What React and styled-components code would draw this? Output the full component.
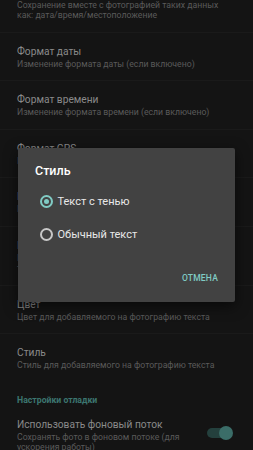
import styled, { createGlobalStyle } from "styled-components";

const GlobalStyle = createGlobalStyle`
  html, body {
    margin: 0;
    padding: 0;
    background: #141414;
    overflow: hidden;
  }
  body {
    font-family: Roboto, "Noto Sans", sans-serif;
  }
`;

const Screen = styled.div`
  width: 253px;
  height: 450px;
  overflow: hidden;
  position: relative;
  background: #141414;
`;

// list is scrolled: top of the first item is above the screen
const List = styled.div`
  display: flex;
  flex-direction: column;
  margin-top: -26.5px;
`;

const Item = styled.div`
  display: flex;
  align-items: center;
  padding: 11px 17px;
  border-bottom: 1px solid ${(p) => (p.$last ? "transparent" : "#1a1a1a")};
`;

const ItemText = styled.div`
  flex: 1;
  display: flex;
  flex-direction: column;
`;

const Title = styled.div`
  font-size: 10.2px;
  line-height: 15px;
  color: #8a8a8a;
  white-space: nowrap;
`;

const Summary = styled.div`
  font-size: 8.7px;
  line-height: 10.5px;
  color: #5a5a5a;
  white-space: nowrap;
`;

const Category = styled.div`
  padding: 12px 17px 0;
  font-size: 8.7px;
  line-height: 11px;
  font-weight: 700;
  color: #3c7670;
`;

const Switch = styled.div`
  position: relative;
  width: 22px;
  height: 10px;
  border-radius: 5px;
  background: #24403d;
  margin: 0 7px 4px 10px;
  &::after {
    content: "";
    position: absolute;
    right: -3.5px;
    top: -2px;
    width: 14px;
    height: 14px;
    border-radius: 50%;
    background: #3b6d68;
  }
`;

const Overlay = styled.div`
  position: absolute;
  inset: 0;
  display: flex;
  align-items: center;
  justify-content: center;
`;

const Dialog = styled.div`
  width: 217px;
  background: #424242;
  border-radius: 2px;
  box-shadow: 0 4px 14px rgba(0, 0, 0, 0.6);
  display: flex;
  flex-direction: column;
  padding: 16px 0 18px;
`;

const DialogTitle = styled.div`
  padding: 0 17px;
  font-size: 12.5px;
  line-height: 14px;
  font-weight: 500;
  color: #ffffff;
  margin-bottom: 6.5px;
`;

const Option = styled.label`
  display: flex;
  align-items: center;
  height: 33px;
  padding: 0 21.5px;
  gap: 5px;
  font-size: 11px;
  color: #e8e8e8;
`;

const Radio = styled.span`
  position: relative;
  box-sizing: border-box;
  width: 13px;
  height: 13px;
  border-radius: 50%;
  border: 2px solid ${(p) => (p.$checked ? "#80cbc4" : "#c8c8c8")};
  &::after {
    content: "";
    display: ${(p) => (p.$checked ? "block" : "none")};
    position: absolute;
    left: 2px;
    top: 2px;
    width: 5px;
    height: 5px;
    border-radius: 50%;
    background: #80cbc4;
  }
`;

const Actions = styled.div`
  display: flex;
  justify-content: flex-end;
  padding: 21.5px 17px 0;
`;

const TextButton = styled.button`
  border: none;
  background: none;
  padding: 0;
  font-family: Roboto, sans-serif;
  font-size: 8.5px;
  font-weight: 500;
  line-height: 12px;
  color: #80cbc4;
  letter-spacing: 0.2px;
`;

const prefs = [
  { title: "Добавлять информацию", summary: ["Сохранение вместе с фотографией таких данных", "как: дата/время/местоположение"] },
  { title: "Формат даты", summary: ["Изменение формата даты (если включено)"] },
  { title: "Формат времени", summary: ["Изменение формата времени (если включено)"] },
  { title: "Формат GPS", summary: ["Изменение формата координат (если включено)"] },
  { title: "Размер шрифта", summary: ["Размер добавляемого на фотографию текста"] },
  { title: "Положение", summary: ["Положение добавляемого на фотографию", "текста"] },
  { title: "Цвет", summary: ["Цвет для добавляемого на фотографию текста"] },
  { title: "Стиль", summary: ["Стиль для добавляемого на фотографию текста"], last: true },
];

const App = () => {
  return (
    <Screen>
      <GlobalStyle />
      <List>
        {prefs.map((p) => (
          <Item key={p.title} $last={p.last}>
            <ItemText>
              <Title>{p.title}</Title>
              {p.summary.map((s) => (
                <Summary key={s}>{s}</Summary>
              ))}
            </ItemText>
          </Item>
        ))}
        <Category>Настройки отладки</Category>
        <Item $last>
          <ItemText>
            <Title>Использовать фоновый поток</Title>
            <Summary>Сохранять фото в фоновом потоке (для</Summary>
            <Summary>ускорения работы)</Summary>
          </ItemText>
          <Switch />
        </Item>
      </List>
      <Overlay>
        <Dialog>
          <DialogTitle>Стиль</DialogTitle>
          <Option>
            <Radio $checked />
            Текст с тенью
          </Option>
          <Option>
            <Radio />
            Обычный текст
          </Option>
          <Actions>
            <TextButton>ОТМЕНА</TextButton>
          </Actions>
        </Dialog>
      </Overlay>
    </Screen>
  );
};

export default App;
